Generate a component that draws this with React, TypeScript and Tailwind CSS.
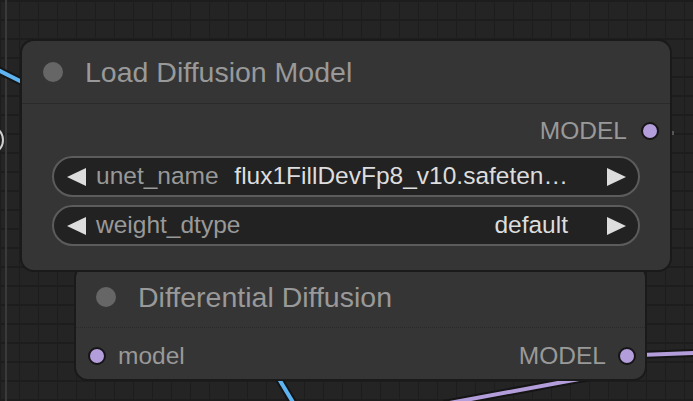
import { type FC } from 'react';

// purple slot dot with dark rim
const Slot: FC = () => (
  <span className="block w-[18px] h-[18px] rounded-full bg-[#b39ddb] border-2 border-[#151515] shrink-0" />
);

const Arrow: FC<{ dir: 'left' | 'right' }> = ({ dir }) => (
  <svg width="20" height="20" viewBox="0 0 20 20" className="shrink-0">
    {dir === 'left' ? (
      <polygon points="20,1 20,19 1,10" fill="#dddddd" />
    ) : (
      <polygon points="0,1 0,19 19,10" fill="#dddddd" />
    )}
  </svg>
);

const Combo: FC<{ label: string; value: string }> = ({ label, value }) => (
  <div className="h-[41px] rounded-full border-2 border-[#5c5c5c] bg-[#222222] flex items-center pl-[12px] pr-[11px]">
    <Arrow dir="left" />
    <span className="ml-[10px] text-[#999999] whitespace-nowrap">{label}</span>
    <span className="flex-1 text-right text-[#dddddd] whitespace-nowrap mr-[39px] ml-[14px]">{value}</span>
    <Arrow dir="right" />
  </div>
);

export default function App() {
  return (
    <div
      className="relative w-[693px] h-[401px] overflow-hidden bg-[#242424] bg-[image:linear-gradient(#1d1d1d_2px,transparent_2px),linear-gradient(90deg,#1d1d1d_1px,transparent_1px)] bg-[size:19px_19px] text-[24.5px] leading-none"
      style={{ fontFamily: '"Liberation Sans", Arial, sans-serif' }}
    >
      {/* group edge + links */}
      <div className="absolute left-[5px] top-0 w-[2px] h-full bg-[#3a3a3a]" />
      <svg className="absolute inset-0" width="693" height="401">
        <path d="M-11 126 A 14 14 0 0 1 -11 154" stroke="#cfcfcf" strokeWidth="2" fill="none" />
        <line x1="-2" y1="70" x2="26" y2="84" stroke="#151515" strokeWidth="8" />
        <line x1="-2" y1="70" x2="26" y2="84" stroke="#5eb3f2" strokeWidth="4" />
        <line x1="276" y1="374" x2="294" y2="404" stroke="#151515" strokeWidth="8" />
        <line x1="276" y1="374" x2="294" y2="404" stroke="#5eb3f2" strokeWidth="4" />
        <line x1="640" y1="355" x2="695" y2="353" stroke="#151515" strokeWidth="8" />
        <line x1="640" y1="355" x2="695" y2="353" stroke="#b39ddb" strokeWidth="4" />
        <line x1="590" y1="377" x2="444" y2="404" stroke="#151515" strokeWidth="8" />
        <line x1="590" y1="377" x2="444" y2="404" stroke="#b39ddb" strokeWidth="4" />
        <line x1="74" y1="352" x2="80" y2="352" stroke="#151515" strokeWidth="8" />
        <line x1="668" y1="133" x2="674" y2="133" stroke="#555555" strokeWidth="4" />
      </svg>

      {/* Differential Diffusion (behind) */}
      <div className="absolute left-[76px] top-[266px] w-[569px] h-[113px] rounded-[12px] bg-[#353535] shadow-[0_0_0_2px_#1a1a1a] flex flex-col">
        <div className="h-[62px] flex items-center pl-[20px] gap-[22px] border-b border-dotted border-[#2a2a2a] pt-[1px]">
          <span className="block w-[20px] h-[20px] rounded-full bg-[#666666]" />
          <span className="text-[28.5px] text-[#999999]">Differential Diffusion</span>
        </div>
        <div className="flex-1 flex items-center pt-[5px] pl-[12px] pr-[9px]">
          <Slot />
          <span className="ml-[12px] text-[#999999]">model</span>
          <span className="ml-auto mr-[12px] text-[#999999]">MODEL</span>
          <Slot />
        </div>
      </div>

      {/* Load Diffusion Model */}
      <div className="absolute left-[22px] top-[41px] w-[648px] h-[229px] rounded-[12px] bg-[#353535] shadow-[0_0_0_2px_#1a1a1a] flex flex-col">
        <div className="h-[63px] flex items-center pl-[21px] gap-[22px] border-b border-[#2a2a2a] shrink-0">
          <span className="block w-[20px] h-[20px] rounded-full bg-[#666666]" />
          <span className="text-[28.5px] text-[#999999]">Load Diffusion Model</span>
        </div>
        <div className="flex flex-col pt-[8px] px-[30px]">
          <div className="h-[38px] flex items-center justify-end -mr-[19px]">
            <span className="mr-[14px] text-[#999999]">MODEL</span>
            <Slot />
          </div>
          <div className="mt-[6px] flex flex-col gap-[8px]">
            <Combo label="unet_name" value="flux1FillDevFp8_v10.safeten…" />
            <Combo label="weight_dtype" value="default" />
          </div>
        </div>
      </div>
    </div>
  );
}
